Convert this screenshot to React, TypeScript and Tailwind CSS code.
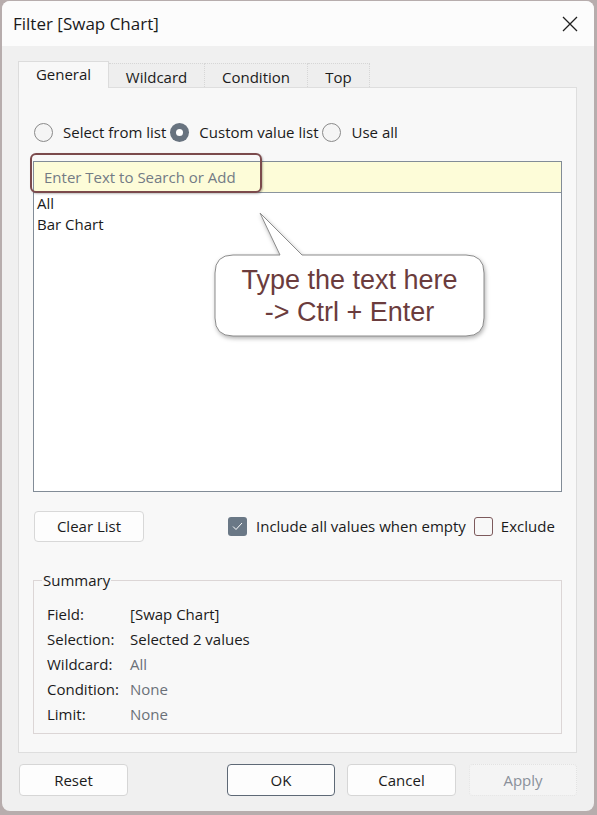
import React from "react";

const Radio = ({ checked }: { checked?: boolean }) =>
    checked ? (
        <span className="w-[19px] h-[19px] rounded-full bg-[#68737f] flex items-center justify-center shrink-0">
            <span className="w-[7px] h-[7px] rounded-full bg-white" />
        </span>
    ) : (
        <span className="block w-[19px] h-[19px] rounded-full border border-[#8a8a8a] bg-[#f5f5f5] shrink-0" />
    );

const summary = [
    { label: "Field:", value: "[Swap Chart]", muted: false },
    { label: "Selection:", value: "Selected 2 values", muted: false },
    { label: "Wildcard:", value: "All", muted: true },
    { label: "Condition:", value: "None", muted: true },
    { label: "Limit:", value: "None", muted: true },
];

const tabs = [
    { name: "General", w: "w-[91px]", active: true },
    { name: "Wildcard", w: "w-[96px]", active: false },
    { name: "Condition", w: "w-[103px]", active: false },
    { name: "Top", w: "w-[62px]", active: false },
];

const App: React.FC = () => {
    return (
        <div className="relative w-[597px] h-[815px] bg-[#b7adad] pt-[1px] pl-[2px] pr-[3px] pb-[4px] font-['Open_Sans',sans-serif] text-[15px] text-[#1b1b1b]">
            <div className="h-full rounded-[8px] overflow-hidden bg-[#f0f0f0] flex flex-col">
                {/* title bar */}
                <div className="h-[45px] bg-[#fcfcfc] flex items-center justify-between pl-[11px] pr-[16px] shrink-0">
                    <span className="text-[17px] text-[#1a1a1a]">Filter [Swap Chart]</span>
                    <svg width="16" height="16" viewBox="0 0 16 16">
                        <path d="M1 1 L15 15 M15 1 L1 15" stroke="#202020" strokeWidth="1.3" />
                    </svg>
                </div>

                <div className="pt-[15px] pl-[16px] pr-[17px]">
                    {/* tabs */}
                    <div className="flex items-end h-[26px]">
                        {tabs.map((t) =>
                            t.active ? (
                                <div key={t.name} className={`${t.w} h-[27px] -mb-px relative z-10 bg-[#f8f8f8] border border-b-0 border-[#dcdcdc] flex items-center justify-center pb-[2px]`}>
                                    {t.name}
                                </div>
                            ) : (
                                <div key={t.name} className={`${t.w} h-[24px] bg-[#eeeeee] border border-dotted border-l-0 border-b-0 border-[#d6d6d6] flex items-center justify-center pt-[3px]`}>
                                    {t.name}
                                </div>
                            )
                        )}
                    </div>

                    {/* tab panel */}
                    <div className="h-[666px] border border-[#dedede] bg-[#f8f8f8] pt-[34px]">
                        <div className="flex items-center h-[20px] pl-[15px]">
                            <Radio />
                            <span className="ml-[10px]">Select from list</span>
                            <span className="ml-[4px] flex"><Radio checked /></span>
                            <span className="ml-[10px]">Custom value list</span>
                            <span className="ml-[3px] flex"><Radio /></span>
                            <span className="ml-[11px]">Use all</span>
                        </div>

                        <div className="ml-[14px] mt-[19px] w-[529px] border border-[#828c97] bg-white">
                            <div className="h-[31px] bg-[#fdfcd8] border-b border-[#8a949e] flex items-center pl-[10px] text-[#737b85]">
                                Enter Text to Search or Add
                            </div>
                            <div className="h-[298px] pl-[3px] leading-[21px]">
                                <div>All</div>
                                <div>Bar Chart</div>
                            </div>
                        </div>

                        <div className="flex items-center mt-[19px] ml-[15px] h-[31px]">
                            <button className="w-[110px] h-[31px] bg-[#fdfdfd] border border-[#d8d8d8] rounded-[4px]">Clear List</button>
                            <span className="ml-[84px] w-[19px] h-[19px] rounded-[3px] bg-[#6a7886] flex items-center justify-center">
                                <svg width="11" height="9" viewBox="0 0 11 9">
                                    <path d="M1 4.5 L4 7.5 L10 1" stroke="#fff" strokeWidth="1" fill="none" />
                                </svg>
                            </span>
                            <span className="ml-[9px]">Include all values when empty</span>
                            <span className="ml-[8px] w-[19px] h-[19px] rounded-[3px] border border-[#7d5a5c] bg-[#f8f8f8]" />
                            <span className="ml-[8px]">Exclude</span>
                        </div>

                        <fieldset className="ml-[14px] mt-[28px] w-[529px] border border-[#dcd6d6] pt-[12px] pb-[6px]">
                            <legend className="ml-[8px] px-[1px] leading-[20px]">Summary</legend>
                            <div className="pl-[13px]">
                                {summary.map((r) => (
                                    <div key={r.label} className="flex h-[25px] items-center">
                                        <span className="w-[83px]">{r.label}</span>
                                        <span className={r.muted ? "text-[#6b7078]" : ""}>{r.value}</span>
                                    </div>
                                ))}
                            </div>
                        </fieldset>
                    </div>

                    {/* footer buttons */}
                    <div className="flex mt-[11px] h-[32px] ml-[1px]">
                        <button className="w-[109px] h-[32px] bg-[#fdfdfd] border border-[#d6d6d6] rounded-[4px]">Reset</button>
                        <button className="ml-[99px] w-[108px] h-[32px] bg-[#fdfdfd] border border-[#5e6976] rounded-[4px]">OK</button>
                        <button className="ml-[12px] w-[109px] h-[32px] bg-[#fdfdfd] border border-[#d6d6d6] rounded-[4px]">Cancel</button>
                        <button className="ml-[13px] w-[108px] h-[32px] bg-[#f4f4f4] border border-dotted border-[#e2e2e2] rounded-[4px] text-[#8a909a]">Apply</button>
                    </div>
                </div>
            </div>

            {/* highlight around search box */}
            <div className="absolute left-[30px] top-[153px] w-[232px] h-[40px] border-2 border-[#7b4a4c] rounded-[6px] shadow-[1px_1px_2px_rgba(0,0,0,0.25)]" />

            {/* speech bubble */}
            <svg className="absolute left-[210px] top-[208px] drop-shadow-[1px_2px_2px_rgba(0,0,0,0.3)]" width="282" height="136" viewBox="0 0 282 136">
                <path
                    d="M23 47 L70 47 L50 5 L92 47 L256 47 Q274 47 274 65 L274 110 Q274 128 256 128 L23 128 Q5 128 5 110 L5 65 Q5 47 23 47 Z"
                    fill="#ffffff"
                    stroke="#8c8c8c"
                    strokeWidth="1"
                />
            </svg>
            <div className="absolute left-[215px] top-[255px] w-[269px] h-[81px] flex flex-col items-center justify-center font-['Liberation_Sans',sans-serif] text-[27px] leading-[32px] text-[#6b3c3d]">
                <span>Type the text here</span>
                <span>-&gt; Ctrl + Enter</span>
            </div>
        </div>
    );
};

export default App;
